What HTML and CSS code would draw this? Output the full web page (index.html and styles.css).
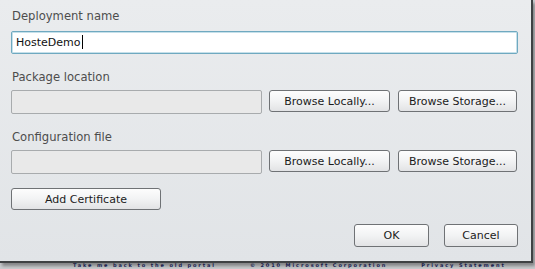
FILE: index.html
```html
<!DOCTYPE html>
<html lang="en">
<head>
<meta charset="UTF-8">
<title>Deployment</title>
<link rel="stylesheet" href="styles.css">
</head>
<body>
<div class="screen">
    <div class="dialog">
        <div class="label first">Deployment name</div>
        <div class="textbox active">HosteDemo<span class="caret"></span></div>

        <div class="label">Package location</div>
        <div class="row">
            <div class="textbox empty"></div>
            <button class="btn browse-local">Browse Locally...</button>
            <button class="btn browse-storage">Browse Storage...</button>
        </div>

        <div class="label">Configuration file</div>
        <div class="row">
            <div class="textbox empty"></div>
            <button class="btn browse-local">Browse Locally...</button>
            <button class="btn browse-storage">Browse Storage...</button>
        </div>

        <button class="btn cert">Add Certificate</button>

        <div class="actions">
            <button class="btn ok">OK</button>
            <button class="btn cancel">Cancel</button>
        </div>
    </div>
    <div class="footer">
        <span>Take me back to the old portal</span>
        <span>&copy; 2010 Microsoft Corporation</span>
        <span>Privacy Statement</span>
    </div>
</div>
</body>
</html>
```

FILE: styles.css
```css
body {
    margin: 0;
    padding: 0;
    background: #c9cbce;
    font-family: "DejaVu Sans", Verdana, sans-serif;
    overflow: hidden;
}
.screen {
    width: 535px;
    height: 269px;
    overflow: hidden;
}
.dialog {
    position: relative;
    z-index: 1;
    box-sizing: border-box;
    width: 533px;
    height: 263px;
    padding: 9px 0 0 11px;
    background: linear-gradient(#eaecee, #e1e4e7);
    border-right: 2px solid #3f4244;
    border-bottom: 2px solid #3f4244;
    box-shadow: 2px 3px 3px rgba(0, 0, 0, 0.35);
}
.label {
    font-size: 11.6px;
    line-height: 14px;
    color: #4d4d4d;
    margin: 16px 0 6px 1px;
}
.label.first {
    margin-top: 0;
    margin-bottom: 8px;
}
.textbox {
    box-sizing: border-box;
    height: 23px;
    border-radius: 2px;
}
.textbox.active {
    width: 507px;
    background: #fff;
    border: 1px solid #6fa9c0;
    box-shadow: inset 0 0 0 1px #c6e0ea;
    font-size: 11px;
    line-height: 21px;
    padding-left: 4px;
    color: #111;
}
.caret {
    display: inline-block;
    width: 1px;
    height: 14px;
    margin-left: 1px;
    background: #000;
    vertical-align: -3px;
}
.textbox.empty {
    width: 251px;
    height: 24px;
    background: #e9e9e9;
    border: 1px solid #a8abad;
}
.row {
    display: flex;
    align-items: flex-start;
}
.btn {
    box-sizing: border-box;
    height: 22px;
    padding: 0;
    font-family: "DejaVu Sans", Verdana, sans-serif;
    font-size: 11px;
    color: #1b1b1b;
    background: linear-gradient(#fdfdfd, #f2f3f4 50%, #e2e3e5);
    border: 1px solid #6f7275;
    border-radius: 3px;
}
.browse-local {
    width: 121px;
    margin-left: 7px;
}
.browse-storage {
    width: 119px;
    margin-left: 8px;
}
.cert {
    display: block;
    width: 150px;
    margin-top: 14px;
}
.actions {
    display: flex;
    justify-content: flex-end;
    gap: 15px;
    width: 507px;
    margin-top: 14px;
}
.ok {
    width: 75px;
    height: 23px;
}
.cancel {
    width: 74px;
    height: 23px;
}
.footer {
    display: flex;
    gap: 34px;
    height: 6px;
    padding-left: 73px;
    font-size: 5px;
    line-height: 5px;
    letter-spacing: 1.9px;
    font-weight: bold;
    color: #1f2a66;
    white-space: nowrap;
}
```
